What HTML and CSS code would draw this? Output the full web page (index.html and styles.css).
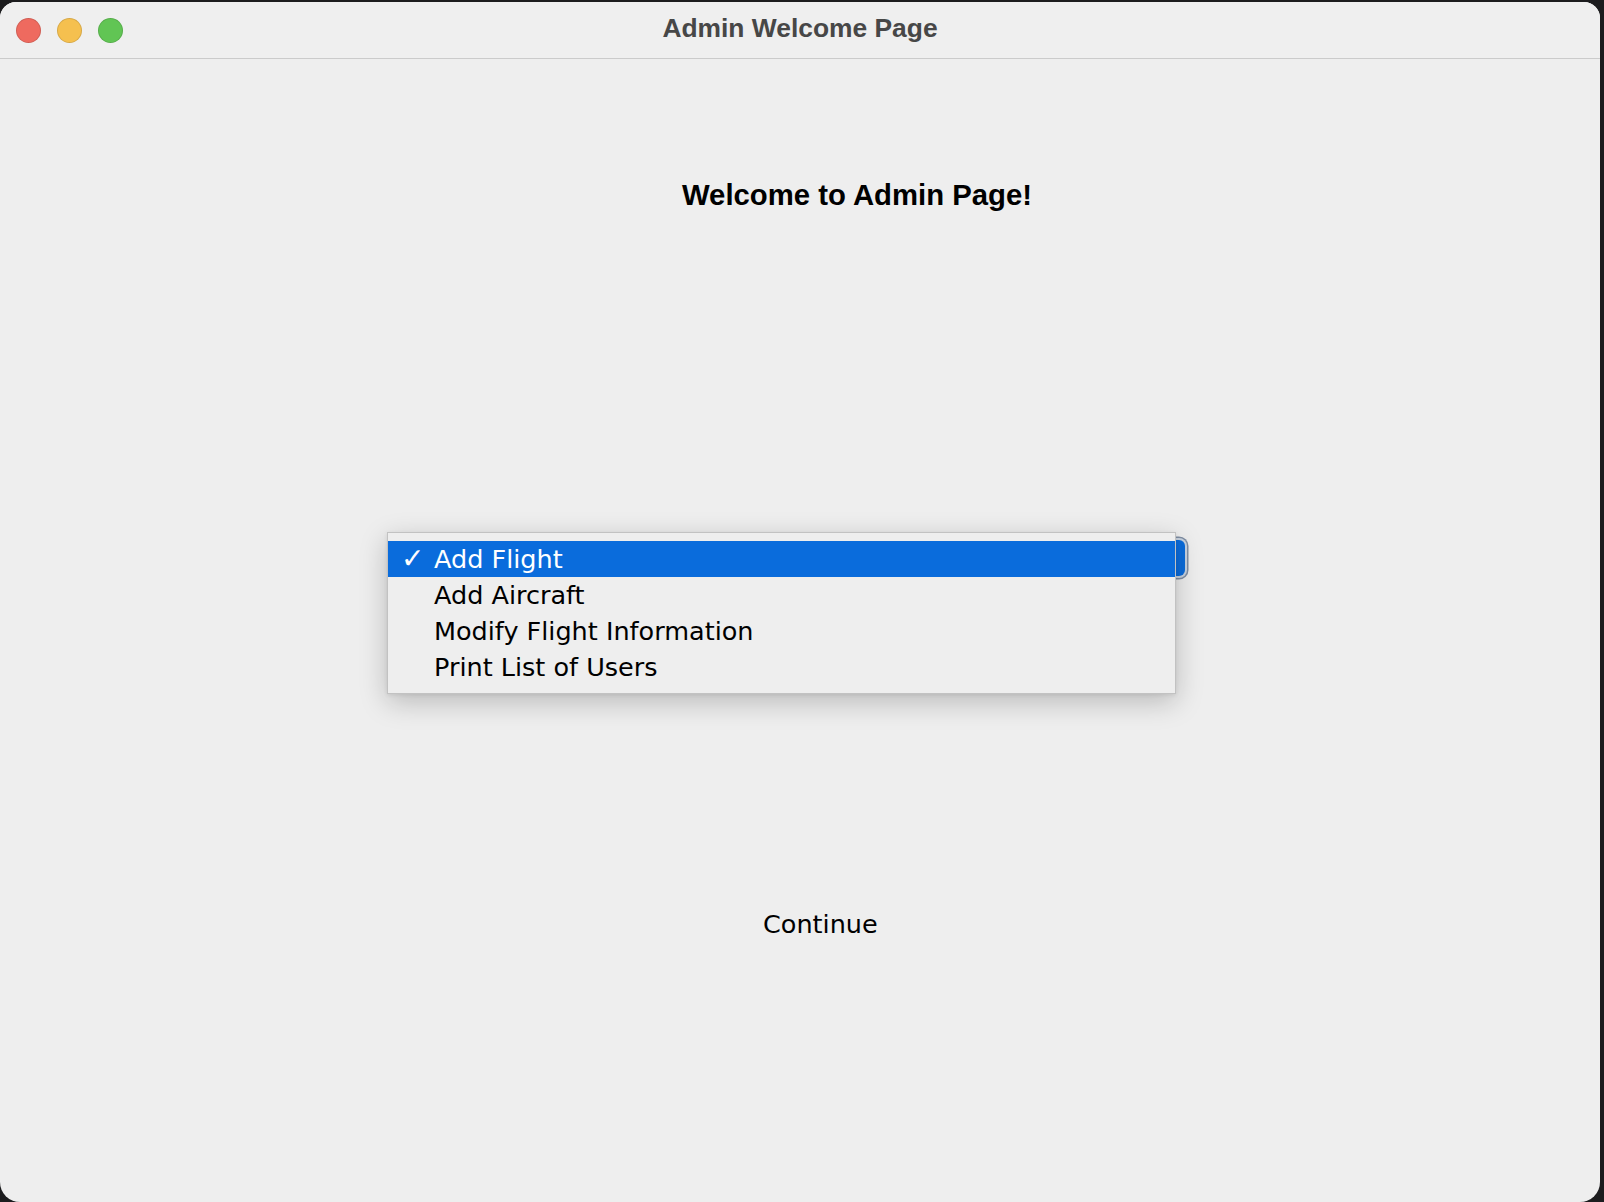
FILE: index.html
```html
<!DOCTYPE html>
<html>
<head>
<meta charset="utf-8">
<title>Admin Welcome Page</title>
<link rel="stylesheet" href="styles.css">
</head>
<body>
<div class="window">
  <div class="titlebar">
    <div class="lights">
      <span class="light red"></span>
      <span class="light yellow"></span>
      <span class="light green"></span>
    </div>
    <div class="title">Admin Welcome Page</div>
  </div>
  <div class="content">
    <div class="heading">Welcome to Admin Page!</div>
    <div class="combo">
      <div class="combo-arrow">
        <svg width="14" height="20" viewBox="0 0 14 20"><path d="M3 8 L7 4 L11 8 M3 12 L7 16 L11 12" fill="none" stroke="#2a7ce6" stroke-width="2"/></svg>
      </div>
      <div class="popup">
        <div class="item selected"><span class="check">✓</span>Add Flight</div>
        <div class="item"><span class="check"></span>Add Aircraft</div>
        <div class="item"><span class="check"></span>Modify Flight Information</div>
        <div class="item"><span class="check"></span>Print List of Users</div>
      </div>
    </div>
    <div class="continue">Continue</div>
  </div>
</div>
</body>
</html>
```
FILE: styles.css
```css
html, body {
  margin: 0;
  padding: 0;
  background: #1c1c1e;
  width: 1604px;
  height: 1202px;
  overflow: hidden;
}
.window {
  margin-top: 2px;
  width: 1600px;
  height: 1200px;
  background: #eeeeee;
  border-radius: 16px 16px 20px 20px;
  overflow: hidden;
  display: flex;
  flex-direction: column;
}
.titlebar {
  height: 52px;
  padding-bottom: 4px;
  background: #efefef;
  border-bottom: 1px solid #cbcbcb;
  display: flex;
  align-items: center;
  position: relative;
  flex: none;
}
.lights {
  display: flex;
  gap: 16px;
  padding-left: 16px;
  margin-top: 4px;
}
.light {
  width: 23px;
  height: 23px;
  border-radius: 50%;
  display: block;
  border: 0.5px solid rgba(0,0,0,0.12);
}
.red { background: #ee6a5f; }
.yellow { background: #f5c04f; }
.green { background: #61c554; }
.title {
  position: absolute;
  left: 0;
  right: 0;
  top: 0;
  text-align: center;
  font-family: "Liberation Sans", Arial, sans-serif;
  font-weight: bold;
  font-size: 26.4px;
  line-height: 52px;
  color: #474747;
}
.content {
  flex: 1;
  display: flex;
  flex-direction: column;
  align-items: flex-start;
}
.heading {
  margin-top: 121px;
  margin-left: 682px;
  font-family: "Liberation Sans", Arial, sans-serif;
  font-weight: bold;
  font-size: 29.3px;
  line-height: 29px;
  color: #000;
}
.combo {
  position: relative;
  margin-top: 331px;
  margin-left: 392px;
  width: 793px;
  height: 36px;
  background: #0a6cdc;
  border-radius: 6px;
  box-shadow: 0 0 0 2px #c9d3e0, 0 0 0 3.5px #7f8ea4;
  display: flex;
  justify-content: flex-end;
  align-items: center;
}
.combo-arrow {
  width: 28px;
  height: 32px;
  margin-right: 4px;
  background: #0e6fe0;
  border-radius: 4px;
  display: flex;
  align-items: center;
  justify-content: center;
  opacity: 0.6;
}
.popup {
  position: absolute;
  left: -5px;
  top: -8px;
  width: 787px;
  padding: 8px 0;
  background: #eeeeee;
  border: 1px solid #c2c2c2;
  box-shadow: 0 8px 26px rgba(0,0,0,0.22), 0 1px 4px rgba(0,0,0,0.08);
  font-family: "DejaVu Sans", Verdana, sans-serif;
  font-size: 25.5px;
  color: #000;
}
.item {
  height: 36px;
  line-height: 36px;
  display: flex;
  align-items: center;
  white-space: nowrap;
}
.item.selected {
  background: #0a6cdc;
  color: #fff;
}
.check {
  width: 33px;
  margin-left: 13px;
  display: inline-block;
  font-size: 28px;
  font-weight: bold;
}
.continue {
  margin-top: 330px;
  margin-left: 763px;
  font-family: "DejaVu Sans", Verdana, sans-serif;
  font-size: 25.5px;
  line-height: 36px;
  color: #000;
}
```
